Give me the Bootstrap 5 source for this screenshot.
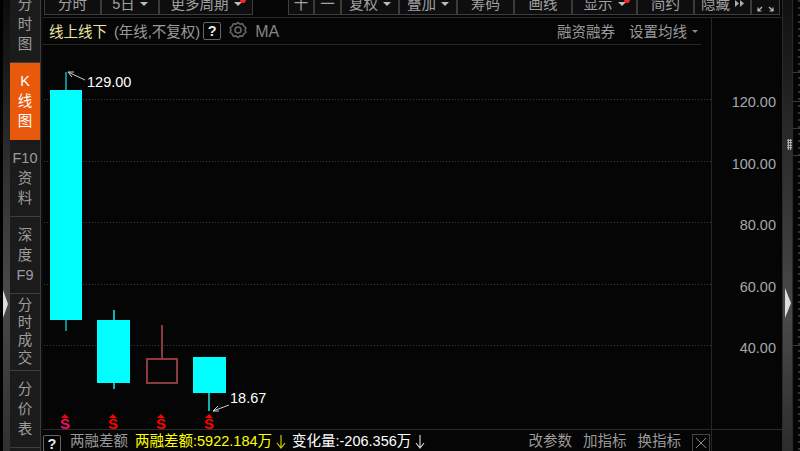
<!DOCTYPE html>
<html lang="zh"><head><meta charset="utf-8"><title>K线图</title>
<link rel="stylesheet" href="https://cdn.jsdelivr.net/npm/bootstrap@5.3.0/dist/css/bootstrap.min.css">
<style>
html,body{height:451px;overflow:hidden;background:#050505}
body{font:14.5px/20px "Liberation Sans","Noto Sans CJK SC",sans-serif;color:#9a9a9a}
.shell{width:800px;height:451px;overflow:hidden}
.shell>*{flex:none}
.edge-left{width:10px;padding-left:3px;background:#000}
.edge-fill{width:7px;height:100%;background:linear-gradient(#0c0c0c,#4a4a4a 65%,#303030)}
.arrow-r{position:absolute;width:0;height:0;border-style:solid;border-color:transparent transparent transparent #ddd}
.edge-left .arrow-r{left:3px;top:290px;border-width:14px 0 14px 5px}
.tabs{width:31px;margin-top:-14px;border-right:1px solid #3c3c3c;background:#1b1b1b;text-align:center}
.tab-item{height:77px;flex:none;border-bottom:1px solid #3e3e3e;display:flex;flex-direction:column;justify-content:center;color:#9d9d9d}
.tab-on{background:#e9590c;color:#fff;border-bottom-color:#e9590c}
.tab-tight{line-height:17.6px}
.gutter{width:2px;background:#0c0c0c}
.main-col{width:739px}
.toolbar{height:18px;border-bottom:1px solid #262626;padding-left:1px}
.tool-set{display:flex;margin-top:-7px;height:22px;border:1px solid #3d3d3d;border-top:0;background:#0e0e0e}
.tool-btn{border-right:2px solid #3a3a3a;color:#a2a2a2;display:flex;align-items:center;justify-content:center;gap:5px;position:relative}
.tool-btn:last-child{border-right:0}
.w26{width:26px}.w27{width:27px}.w57{width:57px}.w58{width:58px}.w65{width:65px}.w92{width:92px}
.caret-d{width:0;height:0;border:4px solid transparent;border-top:4px solid #bbb;border-bottom:0}
.red-dot{position:absolute;top:4px;right:6px;width:6px;height:6px;border-radius:50%;background:#f22}
.chart-col{width:668px}
.axis-col{width:71px;border-left:1px solid #262626}
.chart-head{height:27px;margin-right:10px;padding-left:6px;border-bottom:1px solid #262626;white-space:nowrap;padding-top:4px}
.title-txt{color:#eee3a4;margin-right:7px}
.q-box{display:inline-block;border:1px solid #666;border-radius:2px;color:#e8e8e8;text-align:center;font-weight:700;line-height:16px}
.q-a{width:18px;height:18px;margin:0 8px 0 3px}
.gear{margin-top:-1px}
.ma-txt{color:#858585;font-size:16px;margin-left:8px}
.set-txt{margin-left:14px}
.caret-d.set-caret{border-width:3px 3px 0;border-top-color:#888;margin:8px 3px 0 5px}
.canvas{height:384px;overflow:hidden}
.grid-dot{position:absolute;left:-2px;right:0;height:1px;background:repeating-linear-gradient(90deg,#3a3a3a 0 1px,transparent 1px 3px)}
.bar-c{position:absolute;background:#0ff}
.wick-c{position:absolute;width:2px;background:#0e8c8c}
.wick-c2{background:#12b0b0}
.bar-r{position:absolute;border:2px solid #8b3b3e}
.wick-r{position:absolute;width:2px;background:#8b3b3e}
.price-tag{position:absolute;color:#fff;line-height:16px}
.s-mark{position:absolute;width:16px;text-align:center;color:#f00;font-weight:700;font-size:15px;line-height:11px;top:369px}
.s-mark::before{content:"";display:block;width:0;margin:0 auto;border:4px solid transparent;border-bottom:4px solid #f00;border-top:0}
.s-first{color:#f0105a}
.foot{height:22px;border-top:1px solid #2a2a2a;white-space:nowrap;padding-top:1px}
.q-b{width:18px;height:17px;margin-top:4px;flex:none}
.foot-lbl{margin-left:9px}
.foot-y{color:#ff0;margin-left:7px}.foot-w{color:#fff;margin-left:6px}
.x-box{width:18px;height:18px;margin:3px 1px 0 11px;border:1px solid #444;color:#888;flex:none;display:flex;align-items:center;justify-content:center}
.foot-act{margin-left:11px}
.arrow-d{margin:3px 0 0 4px}
.axis-list{height:412px;padding-top:74px;border-bottom:1px solid #2a2a2a;text-align:right;padding-right:6px;flex:none}
.axis-list div{height:61.5px;color:#a4a9ad}
.scroll-bar{width:10px;border-left:1px solid #2a2a2a;background:linear-gradient(#111,#4a4a4a 70%,#2c2c2c)}
.scroll-bar .arrow-r{left:2px;top:288px;border-width:15px 0 15px 6px}
.grip{position:absolute;left:4px;top:139px;width:5px;height:11px;background-image:radial-gradient(#ccc 1px,transparent 1px);background-size:2.5px 2.5px}
.far-panel{width:8px;border-left:1px solid #2a2a2a;background:#050505 repeating-linear-gradient(#2d3340 0 2px,transparent 2px 7px) right top/2px 100% no-repeat}
.far-cell{border-bottom:1px solid #3a3a3a}
.f1{height:73px}.f2{height:29px}.f3{height:27px}.f4{height:27px}.f5{height:190px}
.tb-end{width:2px}
</style></head>
<body>
<div class="shell d-flex">
  <div class="edge-left position-relative"><div class="edge-fill"></div><span class="arrow-r"></span></div>
  <div class="tabs d-flex flex-column">
    <div class="tab-item">分<br>时<br>图</div>
    <div class="tab-item tab-on">K<br>线<br>图</div>
    <div class="tab-item">F10<br>资<br>料</div>
    <div class="tab-item">深<br>度<br>F9</div>
    <div class="tab-item tab-tight">分<br>时<br>成<br>交</div>
    <div class="tab-item">分<br>价<br>表</div>
  </div>
  <div class="gutter"></div>
  <div class="main-col d-flex flex-column">
    <div class="toolbar d-flex">
      <div class="tool-set">
        <div class="tool-btn w57">分时</div>
        <div class="tool-btn w58">5日<span class="caret-d"></span></div>
        <div class="tool-btn w92">更多周期<span class="caret-d"></span><span class="red-dot"></span></div>
      </div>
      <div class="tool-set ms-auto">
        <div class="tool-btn w26">十</div>
        <div class="tool-btn w27">一</div>
        <div class="tool-btn w58">复权<span class="caret-d"></span></div>
        <div class="tool-btn w58">叠加<span class="caret-d"></span></div>
        <div class="tool-btn w57">筹码</div>
        <div class="tool-btn w58">画线</div>
        <div class="tool-btn w65">显示<span class="caret-d"></span><span class="red-dot"></span></div>
        <div class="tool-btn w57">简约</div>
        <div class="tool-btn w57">隐藏<svg width="9" height="7" viewBox="0 0 9 7"><path d="M0 0l4 3.5L0 7zM5 0l4 3.5L5 7z" fill="#aaa"/></svg></div>
        <div class="tool-btn w27"><svg class="mt-2" width="17" height="8" viewBox="0 0 17 8" fill="none" stroke="#bbb" stroke-width="1.2"><path d="M1 7L5 3M1 3.5V7H4.5M16 7L12 3M12.5 7H16V3.5"/></svg></div>
      </div>
      <div class="tb-end"></div>
    </div>
    <div class="d-flex flex-grow-1">
      <div class="chart-col d-flex flex-column">
        <div class="chart-head d-flex align-items-start">
          <span class="title-txt">线上线下</span><span>(年线,不复权)</span>
          <span class="q-box q-a">?</span>
          <svg class="gear" width="18" height="18" viewBox="0 0 18 18" fill="none" stroke="#666" stroke-width="1.6"><path d="M9 1.5l2 1.6 2.6-.3 1.2 2.3 2 1.6-.7 2.3.7 2.3-2 1.6-1.2 2.3-2.6-.3-2 1.6-2-1.6-2.6.3-1.2-2.3-2-1.6.7-2.3-.7-2.3 2-1.6 1.2-2.3 2.6.3z"/><circle cx="9" cy="9" r="3"/></svg>
          <span class="ma-txt">MA</span>
          <span class="ms-auto">融资融券</span><span class="set-txt">设置均线</span>
          <span class="caret-d set-caret"></span>
        </div>
        <div class="canvas position-relative flex-none">
          <div class="grid-dot" style="top:54px"></div>
          <div class="grid-dot" style="top:116px"></div>
          <div class="grid-dot" style="top:177px"></div>
          <div class="grid-dot" style="top:239px"></div>
          <div class="grid-dot" style="top:300px"></div>

          <div class="wick-c" style="left:22px;top:27px;height:18px"></div>
          <div class="wick-c" style="left:22px;top:275px;height:11px"></div>
          <div class="bar-c" style="left:7px;top:45px;width:32px;height:230px"></div>

          <div class="wick-c wick-c2" style="left:70px;top:265px;height:10px"></div>
          <div class="wick-c wick-c2" style="left:70px;top:338px;height:6px"></div>
          <div class="bar-c" style="left:54px;top:275px;width:33px;height:63px"></div>

          <div class="wick-r" style="left:118px;top:280px;height:33px"></div>
          <div class="bar-r" style="left:103px;top:313px;width:32px;height:26px"></div>

          <div class="wick-c wick-c2" style="left:165px;top:348px;height:18px"></div>
          <div class="bar-c" style="left:150px;top:312px;width:33px;height:36px"></div>

          <svg class="position-absolute top-0 start-0" width="240" height="384" fill="none" stroke="#ccc"><path d="M42 35L25 27M25 27l6 0M25 27l4 5"/><path d="M186 360L170 366M170 366l5-5M170 366l6 0"/></svg>
          <span class="price-tag" style="left:44px;top:29px">129.00</span>
          <span class="price-tag" style="left:187px;top:345px">18.67</span>

          <span class="s-mark s-first" style="left:14px">S</span>
          <span class="s-mark" style="left:62px">S</span>
          <span class="s-mark" style="left:110px">S</span>
          <span class="s-mark" style="left:158px">S</span>
        </div>
        <div class="foot d-flex">
          <span class="q-box q-b">?</span>
          <span class="foot-lbl">两融差额</span>
          <span class="foot-y">两融差额:5922.184万</span>
          <svg class="arrow-d" width="10" height="16" viewBox="0 0 10 16" fill="none" stroke="#cc0" stroke-width="1.2"><path d="M5 1V14M1 9l4 5 4-5"/></svg>
          <span class="foot-w">变化量:-206.356万</span>
          <svg class="arrow-d" width="10" height="16" viewBox="0 0 10 16" fill="none" stroke="#ccc" stroke-width="1.2"><path d="M5 1V14M1 9l4 5 4-5"/></svg>
          <span class="ms-auto">改参数</span><span class="foot-act">加指标</span><span class="foot-act">换指标</span>
          <span class="x-box"><svg width="10" height="10" viewBox="0 0 10 10" stroke="#888"><path d="M0 0L10 10M10 0L0 10"/></svg></span>
        </div>
      </div>
      <div class="axis-col d-flex flex-column">
        <div class="axis-list">
          <div>120.00</div><div>100.00</div><div>80.00</div><div>60.00</div><div>40.00</div>
        </div>
      </div>
    </div>
  </div>
  <div class="scroll-bar position-relative"><span class="grip"></span><span class="arrow-r"></span></div>
  <div class="far-panel d-flex flex-column">
    <div class="far-cell f1"></div><div class="far-cell f2"></div><div class="far-cell f3"></div><div class="far-cell f4"></div><div class="far-cell f5"></div>
  </div>
</div>
</body></html>
